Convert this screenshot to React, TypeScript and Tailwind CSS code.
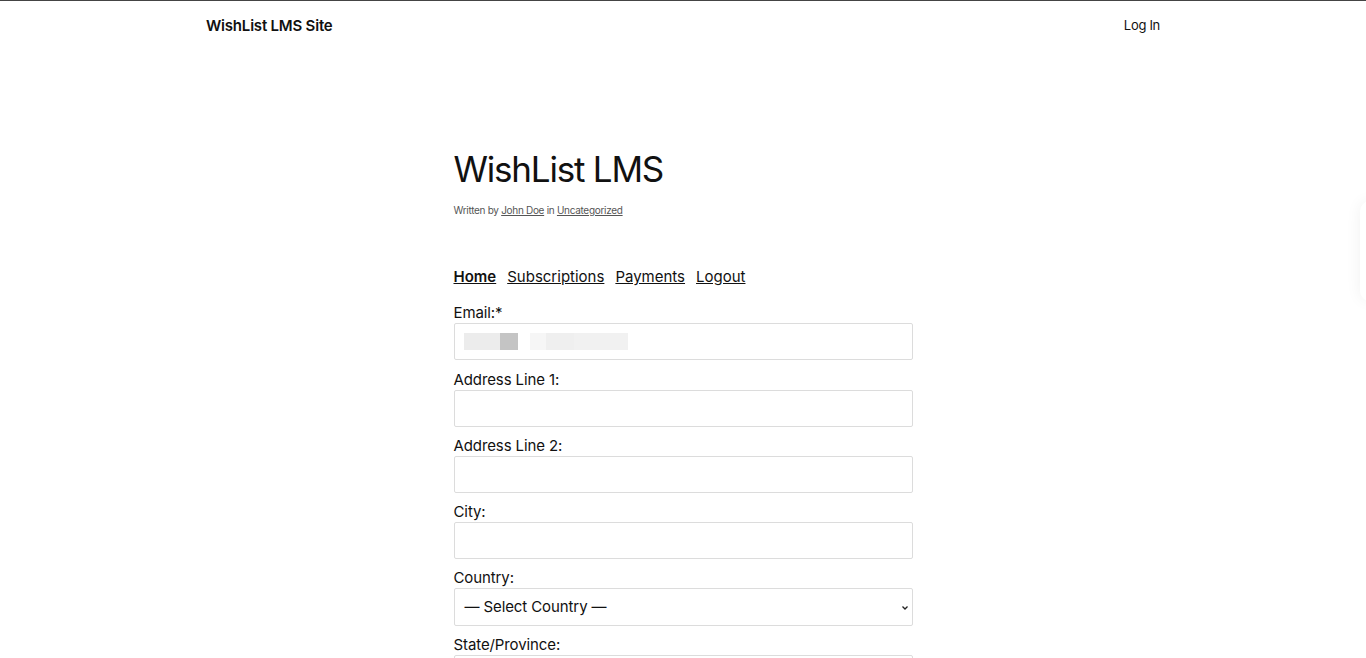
import React from "react";

const font = { fontFamily: "Inter, 'Noto Sans', sans-serif" };

function Field({ label, select }: { label: string; select?: boolean }) {
  return (
    <div className="flex flex-col">
      <label className="text-[15px] leading-[20px] text-[#111] tracking-[-0.1px]">{label}</label>
      {select ? (
        <div className="relative h-[38px] border border-[#dcdcdc] rounded-[2px] bg-white flex items-center px-[10px]">
          <span className="text-[15px] text-[#111] tracking-[-0.1px]">— Select Country —</span>
          <svg className="absolute right-[3px] top-[16px]" width="8" height="6" viewBox="0 0 8 6">
            <path d="M1.5 1.5 L4 4 L6.5 1.5" stroke="#222" strokeWidth="1.3" fill="none" />
          </svg>
        </div>
      ) : (
        <div className="h-[37px] border border-[#dcdcdc] rounded-[2px] bg-white" />
      )}
    </div>
  );
}

export default function App() {
  return (
    <div className="h-[658px] bg-white border-t border-[#444] text-[#111] overflow-hidden relative" style={font}>
      <header className="w-[954px] mx-auto flex items-center justify-between h-[50px]">
        <div className="text-[15px] font-semibold tracking-[-0.2px]">WishList LMS Site</div>
        <div className="text-[13px] tracking-[-0.3px]">Log In</div>
      </header>
      <main className="w-[459px] mx-auto pt-[96px]">
        <h1 className="text-[35px] font-normal leading-[44px] tracking-[-1.2px]">WishList LMS</h1>
        <div className="text-[10px] text-[#555] mt-[12px] tracking-[-0.3px]">
          Written by <span className="underline">John Doe</span> in <span className="underline">Uncategorized</span>
        </div>
        <nav className="flex gap-[11px] text-[15px] mt-[49px] leading-[20px] tracking-[0px]">
          <span className="underline font-semibold">Home</span>
          <span className="underline">Subscriptions</span>
          <span className="underline">Payments</span>
          <span className="underline">Logout</span>
        </nav>
        <div className="flex flex-col mt-[16px] gap-[9px]">
          <div className="flex flex-col mb-[1px]">
            <label className="text-[15px] leading-[20px] tracking-[-0.1px]">Email:*</label>
            <div className="h-[37px] border border-[#dcdcdc] rounded-[2px] bg-white flex items-center pl-[9px]">
              <div className="w-[36px] h-[17px] bg-[#ececec]" />
              <div className="w-[18px] h-[17px] bg-[#c4c4c4]" />
              <div className="w-[12px] h-[17px] bg-white" />
              <div className="w-[16px] h-[17px] bg-[#f6f6f6]" />
              <div className="w-[28px] h-[17px] bg-[#efefef]" />
              <div className="w-[54px] h-[17px] bg-[#f1f1f1]" />
            </div>
          </div>
          <Field label="Address Line 1:" />
          <Field label="Address Line 2:" />
          <Field label="City:" />
          <Field label="Country:" select />
          <Field label="State/Province:" />
        </div>
      </main>
      <div className="absolute right-[-14px] top-[200px] w-[20px] h-[100px] rounded-full shadow-[0_0_16px_rgba(0,0,0,0.06)] bg-white" />
    </div>
  );
}
